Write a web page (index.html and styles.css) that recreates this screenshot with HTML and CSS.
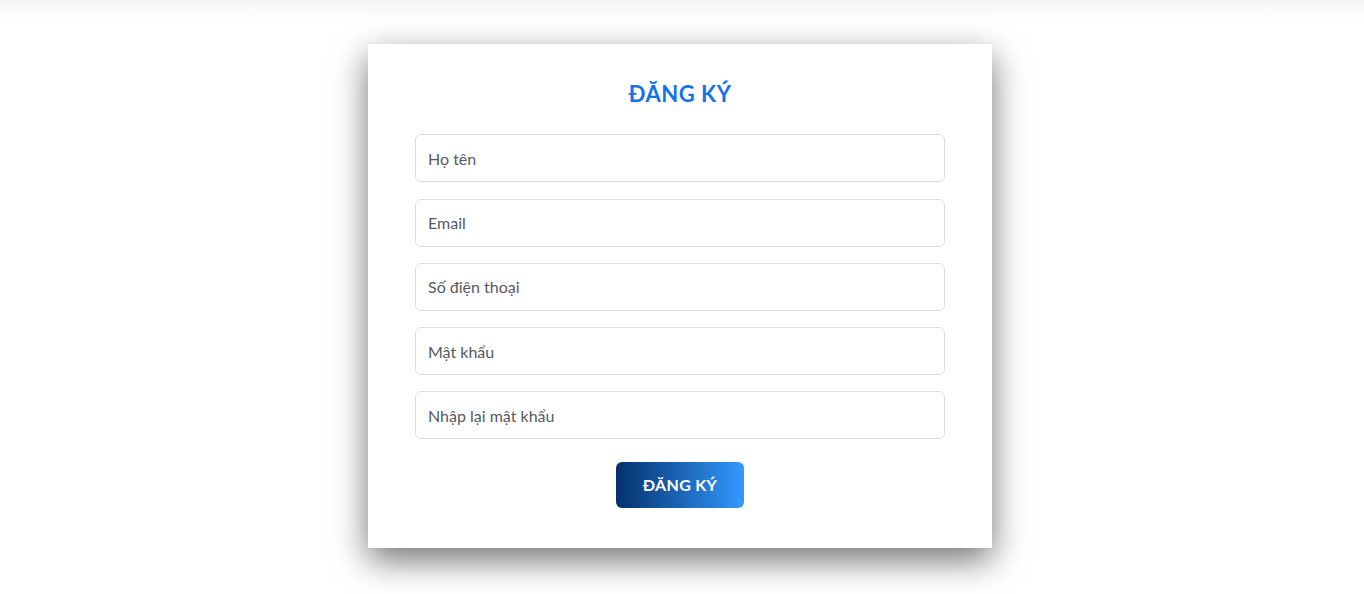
FILE: index.html
```html
<!DOCTYPE html>
<html lang="vi">
<head>
<meta charset="utf-8">
<title>Đăng ký</title>
<link rel="stylesheet" href="styles.css">
</head>
<body>
<div class="topbar"></div>
<main class="page">
  <form class="card">
    <h1 class="title">ĐĂNG KÝ</h1>
    <input class="field" type="text" placeholder="Họ tên">
    <input class="field" type="email" placeholder="Email">
    <input class="field" type="text" placeholder="Số điện thoại">
    <input class="field" type="password" placeholder="Mật khẩu">
    <input class="field" type="password" placeholder="Nhập lại mật khẩu">
    <button class="submit" type="button">ĐĂNG KÝ</button>
  </form>
</main>
</body>
</html>
```
FILE: styles.css
```css
html, body {
  margin: 0;
  padding: 0;
  background: #fff;
  font-family: Lato, "Noto Sans", "Liberation Sans", sans-serif;
}
.topbar {
  height: 20px;
  background: linear-gradient(#f3f3f3, #ffffff);
}
.page {
  display: flex;
  justify-content: center;
  padding: 24px 4px 60px 0;
}
.card {
  width: 624px;
  box-sizing: border-box;
  background: #fff;
  padding: 35px 47px 40px;
  display: flex;
  flex-direction: column;
  gap: 16.25px;
  box-shadow: 0 12px 32px rgba(0, 0, 0, 0.55);
}
.title {
  margin: 0 0 9px;
  text-align: center;
  color: #1473e6;
  font-size: 22px;
  line-height: 30px;
  font-weight: 700;
  letter-spacing: 0.5px;
}
.field {
  height: 48px;
  box-sizing: border-box;
  border: 1px solid #dcdce0;
  border-radius: 6px;
  padding: 0 12px;
  font-family: inherit;
  font-size: 16px;
  color: #333;
  outline: none;
}
.field::placeholder {
  color: #555a60;
}
.submit {
  align-self: center;
  margin-top: 6px;
  width: 128px;
  height: 46px;
  border: none;
  border-radius: 6px;
  background: linear-gradient(90deg, #04316c, #3399ff);
  color: #fff;
  font-family: inherit;
  font-size: 16px;
  font-weight: 700;
  letter-spacing: 0.3px;
  cursor: pointer;
}
```
